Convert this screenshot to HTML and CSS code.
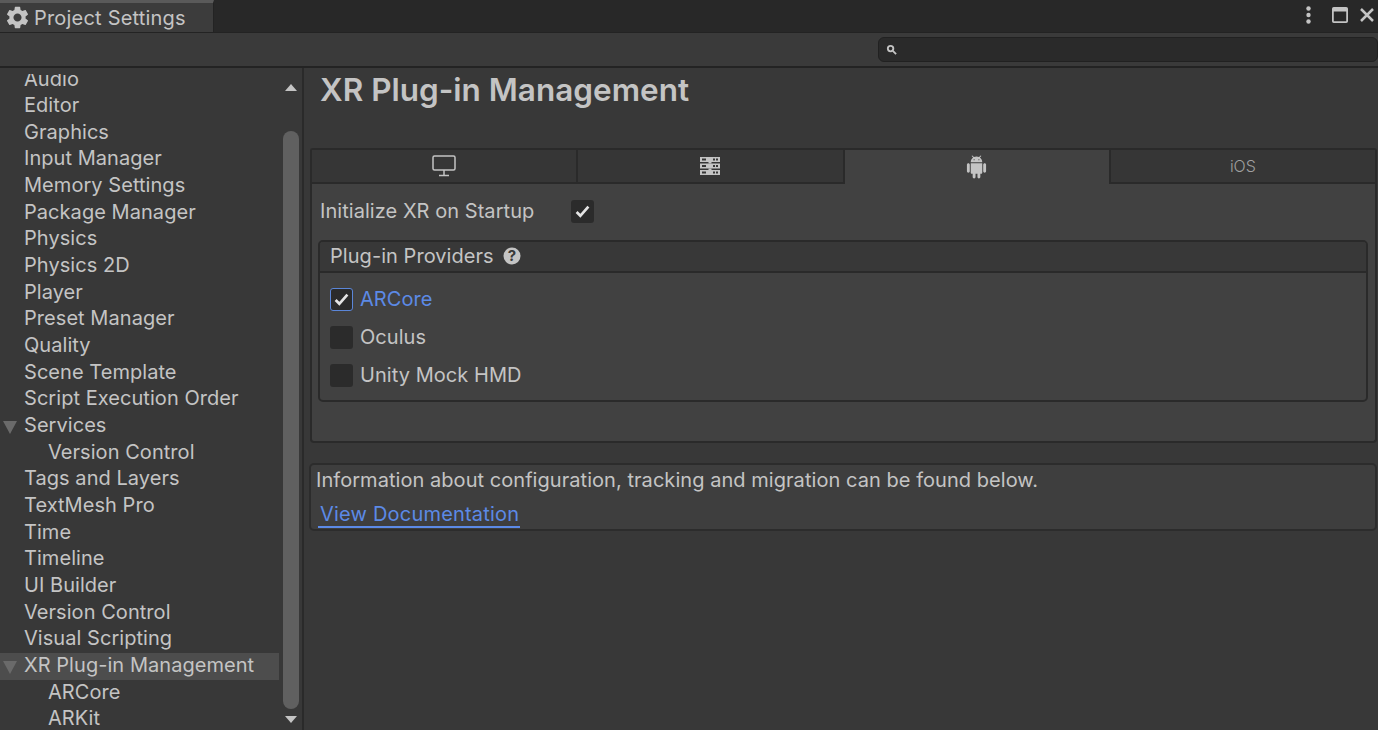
FILE: index.html
```html
<!DOCTYPE html>
<html>
  <head>
    <title>Project Settings</title>
    <link rel="stylesheet" href="styles.css">
  </head>

  <body>
    <div class="tabbar">
      <div class="window-tab">
        <svg class="gear" viewBox="0 0 24 24"><path d="M19.14 12.94c.04-.3.06-.61.06-.94 0-.32-.02-.64-.07-.94l2.03-1.58c.18-.14.23-.41.12-.61l-1.92-3.32c-.12-.22-.37-.29-.59-.22l-2.39.96c-.5-.38-1.03-.7-1.62-.94l-.36-2.54c-.04-.24-.24-.41-.48-.41h-3.84c-.24 0-.43.17-.47.41l-.36 2.54c-.59.24-1.13.57-1.62.94l-2.39-.96c-.22-.08-.47 0-.59.22L2.74 8.87c-.12.21-.08.47.12.61l2.03 1.58c-.05.3-.09.63-.09.94s.02.64.07.94l-2.03 1.58c-.18.14-.23.41-.12.61l1.92 3.32c.12.22.37.29.59.22l2.39-.96c.5.38 1.03.7 1.62.94l.36 2.54c.05.24.24.41.48.41h3.84c.24 0 .44-.17.47-.41l.36-2.54c.59-.24 1.13-.56 1.62-.94l2.39.96c.22.08.47 0 .59-.22l1.92-3.32c.12-.22.07-.47-.12-.61l-2.01-1.58zM12 15.6c-1.98 0-3.6-1.62-3.6-3.6s1.62-3.6 3.6-3.6 3.6 1.62 3.6 3.6-1.62 3.6-3.6 3.6z"/></svg>
        <span>Project Settings</span>
      </div>
      <div class="window-btns">
        <svg class="kebab" viewBox="0 0 5 18"><circle cx="2.500" cy="2.500" r="2.200"/><circle cx="2.500" cy="9" r="2.200"/><circle cx="2.500" cy="15.500" r="2.200"/></svg>
        <svg class="maximize" viewBox="0 0 18 18"><path fill-rule="evenodd" d="M2 0h14a2 2 0 0 1 2 2v14a2 2 0 0 1-2 2H2a2 2 0 0 1-2-2V2a2 2 0 0 1 2-2zm0 5v11h14V5z"/></svg>
        <svg class="close" viewBox="0 0 14 14"><path d="M1 1l12 12M13 1L1 13"/></svg>
      </div>
    </div>

    <div class="toolbar">
      <div class="search">
        <svg viewBox="0 0 12 12"><circle cx="5" cy="5" r="3"/><path d="M7.500 7.500L11 11"/></svg>
      </div>
    </div>

    <div class="body">
      <aside class="sidebar">
        <div class="tree-wrap">
          <ul class="tree">
            <li>Audio</li>
            <li>Editor</li>
            <li>Graphics</li>
            <li>Input Manager</li>
            <li>Memory Settings</li>
            <li>Package Manager</li>
            <li>Physics</li>
            <li>Physics 2D</li>
            <li>Player</li>
            <li>Preset Manager</li>
            <li>Quality</li>
            <li>Scene Template</li>
            <li>Script Execution Order</li>
            <li class="open">Services</li>
            <li class="child">Version Control</li>
            <li>Tags and Layers</li>
            <li>TextMesh Pro</li>
            <li>Time</li>
            <li>Timeline</li>
            <li>UI Builder</li>
            <li>Version Control</li>
            <li>Visual Scripting</li>
            <li class="open selected">XR Plug-in Management</li>
            <li class="child">ARCore</li>
            <li class="child">ARKit</li>
          </ul>
        </div>
        <div class="scrollbar">
          <div class="arrow-up"></div>
          <div class="thumb"></div>
          <div class="arrow-down"></div>
        </div>
      </aside>

      <main class="content">
        <h1>XR Plug-in Management</h1>

        <div class="tabs">
          <div class="tab">
            <svg class="monitor" viewBox="0 0 24 22"><rect x="1" y="1" width="22" height="14" rx="1.500"/><path d="M12 15v5M7 20.500h10"/></svg>
          </div>
          <div class="tab">
            <svg class="server" viewBox="0 0 20 18"><path fill-rule="evenodd" d="M0 0h20v5H0zM2 1.500v2h4v-2zM13 1.500v2h2v-2zM16 1.500v2h2v-2zM0 6.500h20v5H0zM2 8v2h4V8zM13 8v2h2V8zM16 8v2h2V8zM0 13h20v5H0zM2 14.500v2h4v-2zM13 14.500v2h2v-2zM16 14.500v2h2v-2z"/><path d="M8.500 5h3v1.500h-3zM8.500 11.500h3V13h-3z"/></svg>
          </div>
          <div class="tab active">
            <svg class="android" viewBox="0 0 24 24"><path d="M6 18c0 .55.45 1 1 1h1v3.500c0 .83.67 1.500 1.500 1.500s1.500-.67 1.500-1.500V19h2v3.500c0 .83.67 1.500 1.500 1.500s1.500-.67 1.500-1.500V19h1c.55 0 1-.45 1-1V8H6v10zM3.500 8C2.670 8 2 8.670 2 9.500v7c0 .83.67 1.500 1.500 1.500S5 17.330 5 16.500v-7C5 8.670 4.330 8 3.500 8zm17 0c-.83 0-1.500.67-1.500 1.500v7c0 .83.67 1.500 1.500 1.500s1.500-.67 1.500-1.500v-7c0-.83-.67-1.500-1.500-1.500zm-4.970-5.840l1.300-1.300c.2-.2.2-.51 0-.71-.2-.2-.51-.2-.71 0l-1.480 1.480C13.850 1.230 12.950 1 12 1c-.96 0-1.860.23-2.660.63L7.850.15c-.2-.2-.51-.2-.71 0-.2.2-.2.51 0 .71l1.310 1.310C6.970 3.260 6 5.010 6 7h12c0-1.990-.97-3.750-2.470-4.840zM10 5H9V4h1v1zm5 0h-1V4h1v1z"/></svg>
          </div>
          <div class="tab ios">iOS</div>
        </div>

        <section class="panel">
          <div class="startup">
            <span class="startup-label">Initialize XR on Startup</span>
            <span class="check"><svg viewBox="0 0 14 12"><path d="M1.500 6.500L5 10l7.500-8.500"/></svg></span>
          </div>

          <div class="providers">
            <div class="providers-head">
              <span>Plug-in Providers</span>
              <svg class="help" viewBox="0 0 18 18"><circle cx="9" cy="9" r="8.500"/><text x="9" y="14" text-anchor="middle">?</text></svg>
            </div>
            <div class="providers-list">
              <div class="provider on">
                <span class="check focused"><svg viewBox="0 0 14 12"><path d="M1.500 6.500L5 10l7.500-8.500"/></svg></span>
                <span>ARCore</span>
              </div>
              <div class="provider">
                <span class="check"></span>
                <span>Oculus</span>
              </div>
              <div class="provider">
                <span class="check"></span>
                <span>Unity Mock HMD</span>
              </div>
            </div>
          </div>
        </section>

        <section class="info">
          <p>Information about configuration, tracking and migration can be found below.</p>
          <a class="doc-link">View Documentation</a>
        </section>
      </main>
    </div>
  </body>
</html>
```

FILE: styles.css
```css
html, body {
  height: 100%;
}
body {
  margin: 0;
  overflow: hidden;
  display: flex;
  flex-direction: column;
  background: #383838;
  color: #c4c4c4;
  font-family: Inter, "Liberation Sans", sans-serif;
  font-size: 20px;
  letter-spacing: 0.05px;
}
svg {
  display: block;
  fill: #c4c4c4;
}

/* window chrome */
.tabbar {
  height: 33px;
  flex: none;
  display: flex;
  justify-content: space-between;
  background: #282828;
  box-sizing: border-box;
  border-bottom: 1px solid #232323;
}
.window-tab {
  width: 214px;
  display: flex;
  align-items: center;
  gap: 3px;
  padding-left: 4px;
  box-sizing: border-box;
  background: #3c3c3c;
  border-top: 3px solid #5a5a5a;
  border-right: 1px solid #232323;
  letter-spacing: 0.2px;
}
.gear {
  width: 27px;
  height: 27px;
}
.window-btns {
  display: flex;
  align-items: center;
  gap: 12px;
  padding: 0 4px 3px 0;
}
.kebab {
  width: 5px;
  height: 18px;
  margin-right: 9px;
}
.maximize {
  width: 16px;
  height: 16px;
}
.close {
  width: 14px;
  height: 14px;
  fill: none;
  stroke: #c4c4c4;
  stroke-width: 2.500;
}
.toolbar {
  height: 35px;
  flex: none;
  display: flex;
  justify-content: flex-end;
  align-items: center;
  box-sizing: border-box;
  background: #3a3a3a;
  border-bottom: 2px solid #232323;
}
.search {
  width: 500px;
  height: 25px;
  display: flex;
  align-items: center;
  padding-left: 7px;
  box-sizing: border-box;
  background: #2a2a2a;
  border: 1px solid #212121;
  border-radius: 6px;
}
.search svg {
  width: 11px;
  height: 11px;
  fill: none;
  stroke: #c4c4c4;
  stroke-width: 2;
}

.body {
  flex: 1;
  display: flex;
  min-height: 0;
}

/* settings tree */
.sidebar {
  width: 304px;
  flex: none;
  display: flex;
  box-sizing: border-box;
  border-right: 2px solid #2a2a2a;
  overflow: hidden;
}
.tree-wrap {
  width: 279px;
  flex: none;
  margin-top: 6px;
  overflow: hidden;
}
.tree {
  list-style: none;
  margin: -7.500px 0 0;
  padding: 0;
}
.tree li {
  height: 26.670px;
  line-height: 24.670px;
  padding-left: 24px;
  white-space: nowrap;
  position: relative;
}
.tree li.child {
  padding-left: 48px;
}
.tree li.selected {
  background: #4d4d4d;
}
.tree li.open::before {
  content: "";
  position: absolute;
  left: 3px;
  top: 8px;
  border-left: 7px solid transparent;
  border-right: 7px solid transparent;
  border-top: 13px solid #6a6a6a;
}
.scrollbar {
  flex: 1;
  display: flex;
  flex-direction: column;
  align-items: center;
}
.arrow-up, .arrow-down {
  width: 0;
  height: 0;
  flex: none;
  border-left: 6px solid transparent;
  border-right: 6px solid transparent;
}
.arrow-up {
  margin-top: 16px;
  border-bottom: 7px solid #c4c4c4;
}
.arrow-down {
  margin-top: 7px;
  border-top: 7px solid #c4c4c4;
}
.thumb {
  width: 16px;
  height: 578px;
  flex: none;
  margin-top: 40px;
  background: #606060;
  border-radius: 8px;
}

/* main column */
.content {
  flex: 1;
  min-width: 0;
  padding-left: 5px;
}
h1 {
  margin: 0;
  height: 80px;
  padding: 1px 0 0 11px;
  box-sizing: border-box;
  font-size: 31.500px;
  line-height: 41px;
  font-weight: 600;
  letter-spacing: 0;
}
.tabs {
  margin: 0 1px;
  display: grid;
  grid-template-columns: repeat(4, 1fr);
  height: 36px;
  box-sizing: border-box;
  border-top: 2px solid #2a2a2a;
  border-left: 2px solid #2a2a2a;
  border-radius: 3px 3px 0 0;
}
.tab {
  display: flex;
  align-items: center;
  justify-content: center;
  background: #363636;
  border-right: 2px solid #2a2a2a;
  border-bottom: 2px solid #2a2a2a;
}
.tab.active {
  background: #414141;
  border-bottom: 0;
}
.tab.ios {
  font-size: 16px;
  letter-spacing: 0;
  font-weight: 300;
  color: #a0a0a0;
}
.monitor {
  width: 24px;
  height: 22px;
  fill: none;
  stroke: #c4c4c4;
  stroke-width: 1.500;
}
.server {
  width: 20px;
  height: 18px;
}
.android {
  width: 23px;
  height: 24px;
}

.panel {
  margin: 0 1px;
  height: 259px;
  padding: 0 0 0 8px;
  box-sizing: border-box;
  background: #414141;
  border: 2px solid #2a2a2a;
  border-top: 0;
  border-radius: 0 0 4px 4px;
}
.startup {
  height: 56px;
  padding-bottom: 1px;
  display: flex;
  align-items: center;
  box-sizing: border-box;
}
.startup-label {
  width: 251px;
  padding-bottom: 2px;
}
.check {
  width: 23px;
  height: 23px;
  flex: none;
  display: flex;
  align-items: center;
  justify-content: center;
  box-sizing: border-box;
  background: #2b2b2b;
  border-radius: 3px;
}
.check svg {
  width: 15px;
  height: 13px;
  fill: none;
  stroke: #e4e4e4;
  stroke-width: 2.500;
}
.check.focused {
  border: 1.500px solid #5b86d8;
}
.providers {
  width: 1050px;
  height: 162px;
  box-sizing: border-box;
  margin-left: -2px;
  border: 2px solid #2a2a2a;
  border-radius: 5px;
}
.providers-head {
  height: 31px;
  display: flex;
  align-items: center;
  gap: 9px;
  padding: 0 0 2px 10px;
  box-sizing: border-box;
  background: #383838;
  border-bottom: 2px solid #2a2a2a;
  border-radius: 3px 3px 0 0;
}
.help {
  width: 18px;
  height: 18px;
}
.help text {
  font-family: Inter, sans-serif;
  font-size: 15px;
  font-weight: 700;
  fill: #383838;
}
.providers-list {
  padding: 7px 0 0 10px;
}
.provider {
  height: 38px;
  display: flex;
  align-items: center;
  gap: 7px;
}
.provider.on {
  color: #5c8ae6;
}

.info {
  margin: 20px 0 0 0;
  height: 68px;
  padding: 3px 0 0 5px;
  box-sizing: border-box;
  background: #3e3e3e;
  border: 2px solid #2c2c2c;
  border-radius: 5px;
  margin-right: 1px;
}
.info p {
  margin: 0;
  line-height: 24px;
}
.doc-link {
  display: inline-block;
  margin: 10px 0 0 2px;
  padding: 0 1px 0 2px;
  line-height: 24px;
  letter-spacing: 0.2px;
  color: #5c8ae6;
  border-bottom: 2px solid #5c8ae6;
}
```
